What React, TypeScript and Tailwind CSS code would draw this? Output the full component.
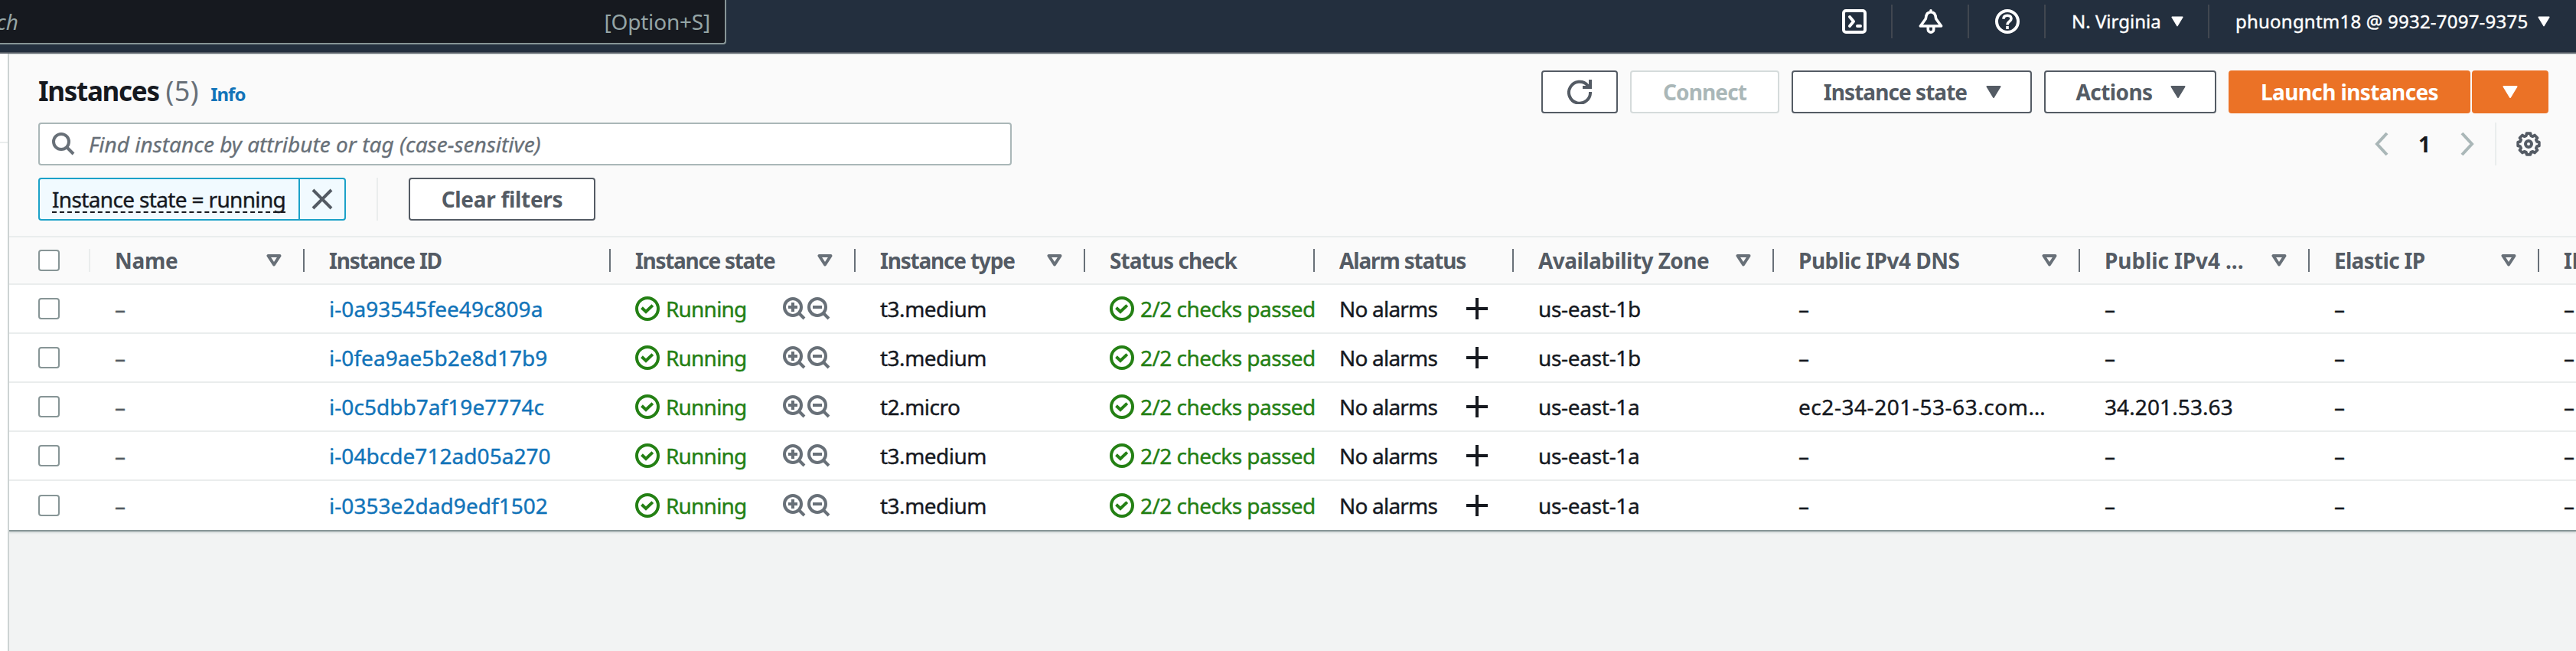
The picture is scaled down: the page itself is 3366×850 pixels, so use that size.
import React from "react";

const GREY = "#545b64";

function CaretDown({ className }: { className: string }) {
  return (
    <svg viewBox="0 0 20 16" className={className} fill="currentColor">
      <path d="M1.5 1h17L10 15z" stroke="currentColor" strokeWidth="2" strokeLinejoin="round" />
    </svg>
  );
}

function SortIcon() {
  return (
    <svg viewBox="0 0 20 16" className="h-4 w-5 shrink-0" fill="none" stroke="#687078" strokeWidth="4" strokeLinejoin="round">
      <path d="M2.500 2h15L10 13.500z" />
    </svg>
  );
}

function Checkbox() {
  return <div className="h-7 w-7 rounded-[4px] border-2 border-[#879596] bg-white" />;
}

function CheckCircle() {
  return (
    <svg viewBox="0 0 32 32" className="h-8 w-8 shrink-0" fill="none" stroke="#248014" strokeWidth="4">
      <circle cx="16" cy="16" r="14" />
      <path d="M8.500 14.800l5.500 5.200 8.800-8.400" />
    </svg>
  );
}

function Magnify({ plus }: { plus?: boolean }) {
  return (
    <svg viewBox="0 0 30 30" className="h-[30px] w-[30px]" fill="none" stroke="#687078" strokeWidth="4">
      <circle cx="13" cy="13" r="11" />
      <path d={plus ? "M21 21l7 7M7 13h12M13 7v12" : "M21 21l7 7M7 13h12"} />
    </svg>
  );
}

function Plus() {
  return (
    <svg viewBox="0 0 28 28" className="h-7 w-7" stroke="#16191f" strokeWidth="4">
      <path d="M14 0v28M0 14h28" />
    </svg>
  );
}

const gearPoints = Array.from({ length: 8 }, (_, k) =>
  [
    [-10, 14],
    [10, 14],
    [16, 11.3],
    [29, 11.3],
  ].map(([offset, radius]) => {
    const a = ((k * 45 + offset) * Math.PI) / 180;
    return `${(16 + radius * Math.sin(a)).toFixed(2)},${(16 - radius * Math.cos(a)).toFixed(2)}`;
  }),
)
  .flat()
  .join(" ");

function Gear() {
  return (
    <svg viewBox="0 0 32 32" className="ml-[26px] h-8 w-8" fill="none" stroke={GREY} strokeWidth="4" strokeLinejoin="round">
      <polygon points={gearPoints} strokeWidth="3.8" />
      <circle cx="16" cy="16" r="4" />
    </svg>
  );
}

type Column = { label: string; width: string; tracking: string; sort?: boolean };

const columns: Column[] = [
  { label: "Name", width: "w-[280px]", tracking: "tracking-[-0.3px]", sort: true },
  { label: "Instance ID", width: "w-[400px]", tracking: "tracking-[-1.2px]" },
  { label: "Instance state", width: "w-[320px]", tracking: "tracking-[-1.3px]", sort: true },
  { label: "Instance type", width: "w-[300px]", tracking: "tracking-[-1.2px]", sort: true },
  { label: "Status check", width: "w-[300px]", tracking: "tracking-[-0.95px]" },
  { label: "Alarm status", width: "w-[260px]", tracking: "tracking-[-1.15px]" },
  { label: "Availability Zone", width: "w-[340px]", tracking: "tracking-[-0.55px]", sort: true },
  { label: "Public IPv4 DNS", width: "w-[400px]", tracking: "tracking-[-0.5px]", sort: true },
  { label: "Public IPv4 ...", width: "w-[300px]", tracking: "tracking-[-0.1px]", sort: true },
  { label: "Elastic IP", width: "w-[300px]", tracking: "tracking-[-0.7px]", sort: true },
  { label: "IPv6 IPs", width: "w-[300px]", tracking: "tracking-[-0.5px]" },
];

const rows = [
  { id: "i-0a93545fee49c809a", type: "t3.medium", zone: "us-east-1b", dns: "–", ip: "–" },
  { id: "i-0fea9ae5b2e8d17b9", type: "t3.medium", zone: "us-east-1b", dns: "–", ip: "–" },
  { id: "i-0c5dbb7af19e7774c", type: "t2.micro", zone: "us-east-1a", dns: "ec2-34-201-53-63.com…", ip: "34.201.53.63" },
  { id: "i-04bcde712ad05a270", type: "t3.medium", zone: "us-east-1a", dns: "–", ip: "–" },
  { id: "i-0353e2dad9edf1502", type: "t3.medium", zone: "us-east-1a", dns: "–", ip: "–" },
];

function TopBar() {
  return (
    <header className="flex h-[70px] w-full items-start justify-between border-b-2 border-[#545b64] bg-[#232f3e]">
      <div className="flex h-[58px] w-[949px] items-center justify-between rounded-br-[4px] border-r-2 border-b-2 border-[#879596] bg-[#16191f] pr-[19px] text-[28px] text-[#95a5a6]">
        <span className="-ml-[5px] italic">ch</span>
        <span className="tracking-[-0.2px]">[Option+S]</span>
      </div>
      <div className="flex h-14 items-center text-[24px] text-white [-webkit-text-stroke:0.4px]">
        <div className="flex h-11 w-[100px] items-center pl-9">
          <svg viewBox="0 0 16 16" className="h-8 w-8" fill="none" stroke="#fff" strokeWidth="2" strokeLinejoin="round" strokeLinecap="round">
            <rect x="1" y="1" width="14" height="14" rx="1.500" />
            <path d="m5 5 2.500 3L5 11M10 11h2" />
          </svg>
        </div>
        <div className="flex h-11 w-[100px] items-center border-l-2 border-[#414750] pl-[34px]">
          <svg viewBox="0 0 32 32" className="h-8 w-8" fill="none" stroke="#fff" strokeWidth="3.600" strokeLinejoin="round" strokeLinecap="round">
            <path d="M16 1.800v1.700M16 3.800C11.200 3.800 9.600 7.500 9.300 12.500L2.400 22h27.200L22.700 12.500C22.400 7.500 20.800 3.800 16 3.800zM12.300 23.500V26.400a3.700 3.700 0 0 0 7.400 0V23.500" />
          </svg>
        </div>
        <div className="flex h-11 w-[100px] items-center border-l-2 border-[#414750] pl-[34px]">
          <svg viewBox="0 0 32 32" className="h-8 w-8" fill="none" stroke="#fff" strokeWidth="4">
            <circle cx="16" cy="16" r="14" />
            <path d="M11 12.800C11 9.700 13 8.300 16 8.300s5 1.500 5 4.200C21 16 16 15.800 16 20.500M16 22v4" strokeWidth="3.600" />
          </svg>
        </div>
        <div className="flex h-11 w-[214px] items-center border-l-2 border-[#414750] pl-[34px]">
          <span>N. Virginia</span>
          <CaretDown className="ml-[13px] h-4 w-4" />
        </div>
        <div className="flex h-11 w-[481px] items-center border-l-2 border-[#414750] pl-[34px]">
          <span className="tracking-[0.22px]">phuongntm18 @ 9932-7097-9375</span>
          <CaretDown className="ml-[13px] h-4 w-4" />
        </div>
      </div>
    </header>
  );
}

const button = "flex h-14 items-center justify-center rounded-[4px] border-2 font-bold text-[28px] whitespace-nowrap";

function Toolbar() {
  return (
    <div className="flex h-[76px] items-start justify-between">
      <div className="flex h-14 items-baseline">
        <h1 className="text-[35px] leading-[54px] font-bold tracking-[-1.3px] text-[#16191f]">
          Instances <span className="ml-[1px] text-[36px] font-normal tracking-[0.5px] text-[#687078]">(5)</span>
        </h1>
        <a className="ml-[15px] text-[24px] font-bold tracking-[-1px] text-[#1274b9]">Info</a>
      </div>
      <div className="flex text-[#545b64]">
        <div className={`${button} w-[100px] border-[#545b64] bg-white`}>
          <svg viewBox="0 0 32 32" className="h-8 w-8" fill="none" stroke={GREY} strokeWidth="4">
            <path d="M30 16A14 14 0 1 1 26.500 7.500L29 10M30 0v10H20" />
          </svg>
        </div>
        <div className={`${button} ml-4 w-[195px] border-[#d5dbdb] bg-white tracking-[-0.9px] text-[#aab7b8]`}>Connect</div>
        <div className={`${button} ml-4 w-[314px] border-[#545b64] bg-white pl-[2px] tracking-[-0.95px]`}>
          Instance state
          <CaretDown className="ml-[25px] h-4 w-5" />
        </div>
        <div className={`${button} ml-4 w-[225px] border-[#545b64] bg-white pl-[2px] tracking-[-0.6px]`}>
          Actions
          <CaretDown className="ml-6 h-4 w-5" />
        </div>
        <div className={`${button} ml-4 w-[316px] border-[#eb7226] bg-[#eb7226] tracking-[-0.6px] text-white`}>Launch instances</div>
        <div className={`${button} ml-[2px] w-[100px] border-[#eb7226] bg-[#eb7226] text-white`}>
          <CaretDown className="h-4 w-5" />
        </div>
      </div>
    </div>
  );
}

function SearchRow() {
  return (
    <div className="flex h-14 items-center justify-between">
      <div className="flex h-14 w-[1272px] items-center rounded-[4px] border-2 border-[#aab7b8] bg-white pl-4">
        <svg viewBox="0 0 30 30" className="h-[30px] w-[30px]" fill="none" stroke="#687078" strokeWidth="4">
          <circle cx="12" cy="12" r="10" />
          <path d="M19 19l9 9" />
        </svg>
        <span className="ml-[18px] text-[28px] text-[#687078] italic [-webkit-text-stroke:0.3px]">Find instance by attribute or tag (case-sensitive)</span>
      </div>
      <div className="flex h-14 items-center pr-[10px]">
        <svg viewBox="0 0 18 30" className="h-[30px] w-[18px]" fill="none" stroke="#aab7b8" strokeWidth="4">
          <path d="M16 1 3 15l13 14" />
        </svg>
        <span className="ml-[39px] w-5 text-[28px] font-bold text-[#16191f]">1</span>
        <svg viewBox="0 0 18 30" className="ml-[35px] h-[30px] w-[18px]" fill="none" stroke="#aab7b8" strokeWidth="4">
          <path d="m2 1 13 14L2 29" />
        </svg>
        <div className="ml-[27px] h-14 w-[2px] bg-[#eaeded]" />
        <Gear />
      </div>
    </div>
  );
}

function FilterRow() {
  return (
    <div className="mt-4 flex h-14 items-center">
      <div className="flex h-14 w-[402px] rounded-[4px] border-2 border-[#1ba1c8] bg-[#f1faff]">
        <div className="flex w-[338px] shrink-0 pt-[4px] pl-4">
          <span className="h-10 border-b-2 border-dashed border-[#16191f] text-[28px] leading-[44px] tracking-[-0.65px] whitespace-nowrap text-[#16191f] [-webkit-text-stroke:0.4px]">
            Instance state = running
          </span>
        </div>
        <div className="flex flex-1 items-center justify-center border-l-2 border-[#1ba1c8]">
          <svg viewBox="0 0 28 28" className="h-7 w-7" stroke={GREY} strokeWidth="4">
            <path d="m2 2 24 24M26 2 2 26" />
          </svg>
        </div>
      </div>
      <div className="ml-10 h-14 w-[2px] bg-[#eaeded]" />
      <div className={`${button} ml-10 w-[244px] border-[#545b64] bg-white tracking-[-0.3px] text-[#545b64]`}>Clear filters</div>
    </div>
  );
}

function Table() {
  return (
    <div className="w-[3600px] text-[28px] leading-[44px] text-[#16191f]">
      <div className="flex h-16 items-center border-y-2 border-[#eaeded] font-bold text-[#545b64]">
        <div className="flex h-[30px] w-[106px] shrink-0 items-center border-r-2 border-[#eaeded] pl-[38px]">
          <Checkbox />
        </div>
        {columns.map((c) => (
          <div key={c.label} className={`${c.width} ${c.tracking} flex h-[30px] shrink-0 items-center justify-between border-r-2 border-[#687078] pr-7 pl-8 whitespace-nowrap`}>
            {c.label}
            {c.sort && <SortIcon />}
          </div>
        ))}
      </div>
      {rows.map((r) => (
        <div key={r.id} className="flex h-16 items-center border-b-2 border-[#eaeded] bg-white [-webkit-text-stroke:0.4px] last:border-b-0">
          <div className="w-[106px] shrink-0 pl-[38px]">
            <Checkbox />
          </div>
          <div className="w-[280px] shrink-0 pl-8 text-[#545b64]">–</div>
          <div className="w-[400px] shrink-0 pl-8 tracking-[0.05px] text-[#1274b9]">{r.id}</div>
          <div className="flex w-[320px] shrink-0 items-center pl-8 text-[#248014]">
            <CheckCircle />
            <span className="ml-2 w-[153px] tracking-[-0.8px]">Running</span>
            <Magnify plus />
            <div className="ml-[2px]"><Magnify /></div>
          </div>
          <div className="w-[300px] shrink-0 pl-8 tracking-[-0.5px]">{r.type}</div>
          <div className="flex w-[300px] shrink-0 items-center overflow-hidden pl-8 whitespace-nowrap text-[#248014]">
            <CheckCircle />
            <span className="ml-2 tracking-[-0.55px]">2/2 checks passed</span>
          </div>
          <div className="flex w-[260px] shrink-0 items-center pl-8">
            <span className="w-[166px] tracking-[-0.8px]">No alarms</span>
            <Plus />
          </div>
          <div className="w-[340px] shrink-0 pl-8 tracking-[-0.3px]">{r.zone}</div>
          <div className="w-[400px] shrink-0 pl-8 tracking-[0.55px] whitespace-nowrap">{r.dns}</div>
          <div className="w-[300px] shrink-0 pl-8 tracking-[0.1px]">{r.ip}</div>
          <div className="w-[300px] shrink-0 pl-8">–</div>
          <div className="w-[300px] shrink-0 pl-8">–</div>
        </div>
      ))}
    </div>
  );
}

export default function App() {
  return (
    <div className="flex h-[850px] w-[3366px] flex-col overflow-hidden bg-[#f2f3f3] font-['Noto_Sans',sans-serif]">
      <TopBar />
      <div className="flex min-h-0 flex-1">
        <div className="h-full w-[10px] shrink-0 bg-white pt-[115px]">
          <div className="h-[2px] bg-[#eaeded]" />
        </div>
        <div className="h-full w-[2px] shrink-0 bg-[#cdd3d3]" />
        <main className="min-w-0 flex-1 overflow-hidden">
          <div className="overflow-hidden border-t-2 border-b-2 border-t-[#eaeded] border-b-[#879596] bg-[#fafafa] shadow-[0_2px_2px_#d5dbdb]">
            <div className="h-[236px] pt-5 pr-9 pl-[38px]">
              <div className="h-[68px]"><Toolbar /></div>
              <SearchRow />
              <FilterRow />
            </div>
            <Table />
          </div>
        </main>
      </div>
    </div>
  );
}
